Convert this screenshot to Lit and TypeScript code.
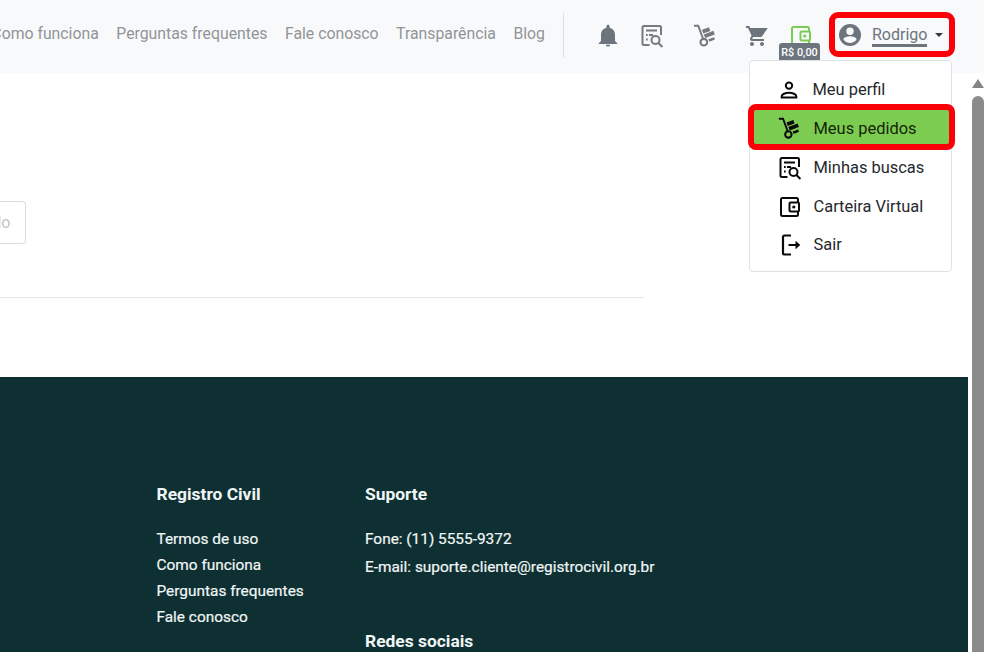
import { LitElement, html, css, svg } from "lit";
import { customElement, property } from "lit/decorators.js";

const icons: Record<string, unknown> = {
  bell: svg`<path fill="currentColor" d="M12 22.600c1.200 0 2.200-.8 2.200-1.800H9.800C9.800 21.800 10.800 22.600 12 22.600zM19 17V11c0-3.600-1.900-6.500-5.400-7.300V2.400C13.600 1.500 12.900.8 12 .8s-1.600.7-1.600 1.600v1.300C6.900 4.500 5 7.400 5 11v6l-2.300 2.200v.8h18.600v-.8z"/>`,
  search: svg`<g fill="none" stroke="currentColor" stroke-width="2"><path d="M9.500 21H4a1.500 1.500 0 0 1-1.500-1.500v-16A1.500 1.500 0 0 1 4 2h15.500A1.500 1.500 0 0 1 21 3.500V11"/><path d="M6 6.500h11M9 11h4M6 11h1.700M6 15.500h1.700"/><circle cx="15.500" cy="16" r="4"/><path d="M18.400 19l4 4"/></g>`,
  dolly: svg`<g fill="currentColor"><path fill="none" stroke="currentColor" stroke-width="2" d="M1 1.900h4.500l5 13.500"/><circle cx="11.300" cy="19" r="3.500" fill="none" stroke="currentColor" stroke-width="2.200"/><path d="M9.300 6.100l7.400-2.800 1.400 3.900-7.400 2.600zM11.200 11l10.200-3.900 1.400 3.900-9.900 3.700zM16 15.900l6-2.200.9 2.500-5.800 2.300z"/></g>`,
  cart: svg`<path fill="currentColor" d="M7 18c-1.100 0-2 .9-2 2s.9 2 2 2 2-.9 2-2-.9-2-2-2zM1 2v2h2l3.600 7.600-1.350 2.450C4.520 15.370 5.480 17 7 17h12v-2H7.420c-.14 0-.25-.11-.25-.25L8.100 13h7.450c.75 0 1.410-.41 1.750-1.030L22.700 4H5.210L4.270 2H1zm16 16c-1.100 0-2 .9-2 2s.9 2 2 2 2-.9 2-2-.9-2-2-2z"/>`,
  wallet: svg`<g fill="none" stroke="currentColor" stroke-width="2"><path d="M20 7V4.500A1.500 1.500 0 0 0 18.500 3h-14A1.500 1.500 0 0 0 3 4.500v15A1.500 1.500 0 0 0 4.500 21h14a1.500 1.500 0 0 0 1.500-1.500V17"/><rect x="11.500" y="7.500" width="9.500" height="9" rx="1"/></g><circle cx="15.800" cy="12" r="1.600" fill="currentColor"/>`,
  account: svg`<path fill="currentColor" fill-rule="evenodd" d="M12 1a11 11 0 1 0 0 22 11 11 0 0 0 0-22zm0 3.600a3.700 3.700 0 1 1 0 7.400 3.700 3.700 0 0 1 0-7.400zm0 15.400a8 8 0 0 1-6.600-3.500c0-2.200 4.400-3.300 6.600-3.300s6.600 1.100 6.600 3.300A8 8 0 0 1 12 20z"/>`,
  person: svg`<g fill="none" stroke="currentColor" stroke-width="2"><circle cx="12" cy="7.600" r="3.200"/><path d="M4.700 19.500v-1.200c0-2.100 3.800-3.500 7.300-3.500s7.300 1.400 7.300 3.500v1.200z"/></g>`,
  exit: svg`<path fill="none" stroke="currentColor" stroke-width="2.200" d="M13 2.500H6.500A1.500 1.500 0 0 0 5 4v16A1.500 1.500 0 0 0 6.500 21.500H13M10.500 12h10"/><path fill="currentColor" d="M17.500 7.800L22.300 12l-4.800 4.200z"/>`,
};

@customElement("ui-icon")
class UiIcon extends LitElement {
  @property() name = "";
  static styles = css`
    :host { display: block; width: 24px; height: 24px; flex: none; }
    svg { display: block; width: 100%; height: 100%; }
  `;
  render() {
    return html`<svg viewBox="0 0 24 24">${icons[this.name]}</svg>`;
  }
}

@customElement("app-root")
class AppRoot extends LitElement {
  static styles = css`
    :host { display: block; width: 984px; height: 652px; overflow: hidden; background: #fff;
      font-family: Roboto, "Liberation Sans", sans-serif; font-size: 16px; color: #212529; }
    * { box-sizing: border-box; }
    .header { position: relative; z-index: 1; height: 73px; background: #f7f9fb; display: flex; color: #6c757d; }
    .nav { width: 564px; height: 58px; padding: 13px 19px 0 0; display: flex; justify-content: flex-end; gap: 17.500px; white-space: nowrap; color: #929496; line-height: 41px; font-size: 15.800px; }
    .sep { width: 1px; height: 45px; margin: 13px 0 0 -1px; background: #dcdfe2; flex: none; }
    .tools { display: flex; padding: 24px 0 0 32px; width: 265px; flex: none; }
    .doc { margin-left: 20px; color: #77797c; }
    .dolly { margin-left: 29px; color: #77797c; width: 23px; height: 23px; }
    .cart { margin-left: 29px; }
    .wallet { position: relative; margin-left: 20px; color: #7dcc52; }
    .badge { position: absolute; left: -10px; top: 19px; width: 41px; height: 17px; border-radius: 3px 3px 0 0; background: #6c757d; color: #fff; font-size: 10.800px; font-weight: 500; line-height: 20px; text-align: center; white-space: nowrap; }
    .user { width: 126px; height: 45px; margin: 12px 0 0 0; border: 6px solid #fb0007; border-radius: 9px; display: flex; padding: 5px 0 0 3px; }
    .name { margin-left: 10px; height: 24px; padding-top: 2px; line-height: 19px; border-bottom: 3px solid #6c757d; }
    .caret { margin: 10px 0 0 8px; border: 4px solid transparent; border-top-color: #343a40; border-bottom: 0; height: 4px; }
    .menu { position: absolute; left: 749px; top: 60px; width: 203px; height: 212px; border: 1px solid #dee2e6; border-radius: 4px; background: #fff; padding-top: 9px; }
    .item { height: 39px; display: flex; align-items: center; padding-left: 28px; color: #26292c; font-size: 16.450px; white-space: nowrap; }
    .item span { padding-top: 1px; line-height: 20px; }
    .item ui-icon { color: #0a0a0a; margin-right: 11.500px; }
    .item:first-child { padding-left: 27px; }
    .item:last-child { height: 37px; }
    .item.active { position: relative; height: 46px; width: 207px; margin: -5px 0 -2px -2px; border: 6px solid #fb0007; border-radius: 8px; background: #7dcc52; padding: 2px 0 0 24px; color: #142508; }
    .item.active ui-icon { width: 22px; height: 22px; margin-right: 13.500px; }
    .body { height: 579px; display: grid; grid-template-columns: 968px 12px; column-gap: 4px; }
    .content { height: 304px; padding-top: 128px; }
    .field { width: 26px; height: 43px; border: 1px solid #dcdcdc; border-left: 0; border-radius: 0 4px 4px 0; color: #c4c4c4; line-height: 42px; padding-right: 14.500px; display: flex; justify-content: flex-end; }
    .rule { width: 644px; height: 1px; background: #e4e5e6; margin-top: 53px; }
    .footer { height: 275px; background: #0e3032; color: #f1f6f6; padding: 104px 0 0 156.500px; display: grid; grid-template-columns: 208.500px 1fr; font-size: 15.400px; white-space: nowrap; -webkit-text-stroke: 0.200px #f1f6f6; }
    .title { font-size: 17.400px; font-weight: 700; line-height: 26px; margin-bottom: 18.500px; -webkit-text-stroke: 0; }
    .link { height: 26.300px; line-height: 26px; }
    .contact { height: 28px; line-height: 26px; }
    .social { margin-top: 46.500px; }
    .bar { padding-top: 6px; }
    .up { width: 12px; height: 9px; background: #858585; clip-path: polygon(50% 0, 100% 100%, 0 100%); }
    .thumb { margin-top: 8px; height: 580px; border-radius: 6px; background: #8b8b8b; }
    .scroll { height: 579px; overflow: hidden; }
  `;
  private nav = ["Como funciona", "Perguntas frequentes", "Fale conosco", "Transparência", "Blog"];
  private items = [["person", "Meu perfil"], ["dolly", "Meus pedidos"], ["search", "Minhas buscas"], ["wallet", "Carteira Virtual"], ["exit", "Sair"]];
  private links = ["Termos de uso", "Como funciona", "Perguntas frequentes", "Fale conosco"];
  render() {
    return html`
      <header class="header">
        <nav class="nav">${this.nav.map((t) => html`<span>${t}</span>`)}</nav>
        <div class="sep"></div>
        <div class="tools">
          <ui-icon name="bell"></ui-icon>
          <ui-icon class="doc" name="search"></ui-icon>
          <ui-icon class="dolly" name="dolly"></ui-icon>
          <ui-icon class="cart" name="cart"></ui-icon>
          <div class="wallet"><ui-icon name="wallet"></ui-icon><span class="badge">R$ 0,00</span></div>
        </div>
        <div class="user"><ui-icon name="account"></ui-icon><span class="name">Rodrigo</span><span class="caret"></span></div>
        <div class="menu">${this.items.map(([i, t], n) => html`<div class="item ${n === 1 ? "active" : ""}"><ui-icon name=${i}></ui-icon><span>${t}</span></div>`)}</div>
      </header>
      <div class="body">
        <main>
          <section class="content"><div class="field">do</div><div class="rule"></div></section>
          <footer class="footer">
            <div><div class="title">Registro Civil</div>${this.links.map((t) => html`<div class="link">${t}</div>`)}</div>
            <div>
              <div class="title">Suporte</div>
              <div class="contact">Fone: (11) 5555-9372</div>
              <div class="contact">E-mail: suporte.cliente@registrocivil.org.br</div>
              <div class="title social">Redes sociais</div>
            </div>
          </footer>
        </main>
        <aside class="scroll bar"><div class="up"></div><div class="thumb"></div></aside>
      </div>`;
  }
}
